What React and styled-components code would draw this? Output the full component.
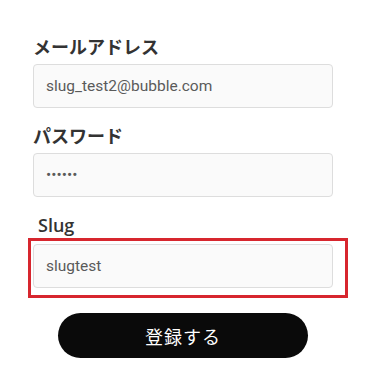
import React from 'react';
import styled, { createGlobalStyle } from 'styled-components';

const Global = createGlobalStyle`
  body {
    margin: 0;
    background: #fff;
    font-family: "Noto Sans", "Noto Sans CJK JP", sans-serif;
  }
`;

const Form = styled.form`
  width: 300px;
  padding: 34px 0 0 33px;
  display: flex;
  flex-direction: column;
`;

const Label = styled.label`
  display: block;
  font-family: "Open Sans", "Noto Sans CJK JP", sans-serif;
  font-size: 18px;
  font-weight: ${p => p.$weight || 700};
  line-height: 26px;
  color: #333;
  margin: ${p => p.$top || 0}px 0 ${p => (p.$bottom ?? 4)}px;
  padding-left: ${p => p.$indent || 0}px;
`;

const Input = styled.input`
  box-sizing: border-box;
  width: 300px;
  height: 44px;
  padding: 0 12px;
  border: 1px solid #ddd;
  border-radius: 4px;
  background: #fafafa;
  font-family: Roboto, "Noto Sans", sans-serif;
  font-size: 15.5px;
  color: #5a5a5a;
  outline: none;
`;

const Highlight = styled.div`
  border: 3px solid #d7262e;
  padding: 3px 12px 7px 2px;
  margin-left: -5px;
  width: 300px;
`;

const Submit = styled.button`
  align-self: center;
  margin-top: 15px;
  width: 250px;
  height: 45px;
  border: none;
  border-radius: 23px;
  background: #0a0a0a;
  color: #fff;
  font-family: "Noto Sans CJK JP", sans-serif;
  font-size: 18px;
  letter-spacing: 1px;
  cursor: pointer;
`;

export default function App() {
  return (
    <>
      <Global />
      <Form onSubmit={e => e.preventDefault()}>
        <Label>メールアドレス</Label>
        <Input defaultValue="slug_test2@bubble.com" />
        <Label $top={15}>パスワード</Label>
        <Input type="password" defaultValue="aaaaaa" />
        <Label $top={15} $bottom={0} $indent={5} $weight={600}>Slug</Label>
        <Highlight>
          <Input defaultValue="slugtest" />
        </Highlight>
        <Submit type="submit">登録する</Submit>
      </Form>
    </>
  );
}
